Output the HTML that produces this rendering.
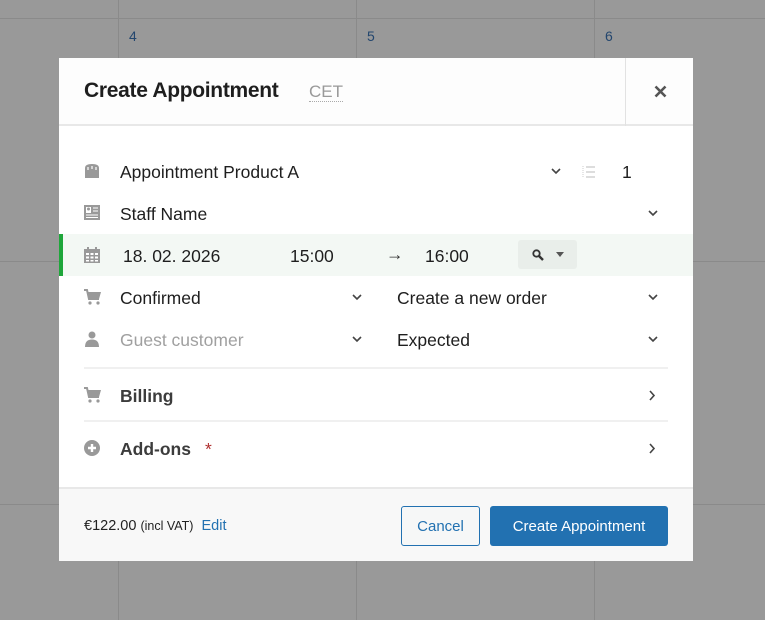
<!DOCTYPE html>
<html><head><meta charset="utf-8"><style>
*{box-sizing:border-box;margin:0;padding:0}
body{width:765px;height:620px;background:#999;position:relative;overflow:hidden;font-family:"Liberation Sans",sans-serif;color:#1e1e1e}
.vl{position:absolute;top:0;height:620px;width:1px;background:#8a8a8a}
.hl{position:absolute;left:0;width:765px;height:1px;background:#8a8a8a}
.num{position:absolute;top:28px;font-size:14px;color:#23466e}
.modal{position:absolute;left:59px;top:58px;width:634px;height:503px;background:#fff}
.hdr{height:68px;border-bottom:2px solid #e8e8e8;position:relative;background:#fdfdfd}
.hdr h1{position:absolute;left:25px;top:21px;font-size:21px;font-weight:bold;letter-spacing:-0.3px;color:#1e1e1e}
.hdr .cet{position:absolute;left:250px;top:25px;font-size:17px;color:#999;border-bottom:1px dotted #aaa;line-height:18px}
.close{position:absolute;left:566px;top:0;width:68px;height:68px;border-left:1px solid #e2e2e2;color:#555}
.row{position:absolute;left:0;width:634px;height:42px;font-size:17.5px}
.row .t{position:absolute;top:12px}
.ic{position:absolute;left:25px;top:13px}
.sep{position:absolute;left:25px;width:584px;height:2px;background:#f0f0f0}
.foot{position:absolute;left:0;top:429px;width:634px;height:74px;background:#f8f8f8;border-top:2px solid #e8e8e8}
.btn{position:absolute;top:17px;height:40px;border-radius:3px;font-size:15px;display:flex;align-items:center;justify-content:center}
</style></head><body>
<div class="hl" style="top:18px"></div>
<div class="hl" style="top:261px"></div>
<div class="hl" style="top:504px"></div>
<div class="vl" style="left:118px"></div>
<div class="vl" style="left:356px"></div>
<div class="vl" style="left:594px"></div>
<div class="num" style="left:129px">4</div>
<div class="num" style="left:367px">5</div>
<div class="num" style="left:605px">6</div>

<div class="modal">
 <div class="hdr"><h1>Create Appointment</h1><span class="cet">CET</span><div class="close"><svg style="position:absolute;left:28px;top:27px" width="13" height="13" viewBox="0 0 13 13"><path d="M1.5 1.5L11.5 11.5M11.5 1.5L1.5 11.5" stroke="#555" stroke-width="2.6"/></svg></div></div>

 <div class="row" style="top:92px">
  <svg class="ic" width="16" height="16" viewBox="0 0 16 16"><path d="M1 15V5Q1 1 8 1Q15 1 15 5V15Z" fill="#999"/><path d="M4 7V4M8 6V3M12 7V4" stroke="#fff" stroke-width="1.2"/></svg>
  <span class="t" style="left:61px">Appointment Product A</span>
  <svg style="position:absolute;left:492px;top:18px" width="10" height="7" viewBox="0 0 10 7"><path d="M1 1L5 5L9 1" stroke="#444" stroke-width="1.6" fill="none"/></svg>
  <svg style="position:absolute;left:523px;top:15px" width="14" height="14" viewBox="0 0 14 14"><path d="M4 2H13M4 7H13M4 12H13" stroke="#bbb" stroke-width="1"/><path d="M1 1V13" stroke="#ccc" stroke-dasharray="1 1"/></svg>
  <span class="t" style="left:563px">1</span>
 </div>
 <div class="row" style="top:134px">
  <svg class="ic" width="16" height="15" viewBox="0 0 16 15"><rect x="0" y="0" width="16" height="15" fill="#999"/><rect x="2" y="2" width="5" height="6" fill="#fff"/><circle cx="4.5" cy="4" r="1.5" fill="#999"/><path d="M9 3H14M9 6H14M2 10H14M2 12.5H14" stroke="#fff" stroke-width="1"/></svg>
  <span class="t" style="left:61px">Staff Name</span>
  <svg style="position:absolute;left:589px;top:18px" width="10" height="7" viewBox="0 0 10 7"><path d="M1 1L5 5L9 1" stroke="#444" stroke-width="1.6" fill="none"/></svg>
 </div>
 <div class="row" style="top:176px;background:#f3f8f4">
  <div style="position:absolute;left:0;top:0;width:4px;height:42px;background:#1ea63a"></div>
  <svg class="ic" width="16" height="16" viewBox="0 0 16 16"><rect x="0" y="2" width="16" height="14" fill="#999"/><rect x="3" y="0" width="2" height="4" fill="#999"/><rect x="11" y="0" width="2" height="4" fill="#999"/><g fill="#fff"><rect x="2" y="6" width="3" height="2"/><rect x="6.5" y="6" width="3" height="2"/><rect x="11" y="6" width="3" height="2"/><rect x="2" y="9.5" width="3" height="2"/><rect x="6.5" y="9.5" width="3" height="2"/><rect x="11" y="9.5" width="3" height="2"/><rect x="2" y="13" width="3" height="1.5"/><rect x="6.5" y="13" width="3" height="1.5"/><rect x="11" y="13" width="3" height="1.5"/></g></svg>
  <span class="t" style="left:64px">18. 02. 2026</span>
  <span class="t" style="left:231px">15:00</span>
  <span class="t" style="left:327px;top:10px;color:#333">→</span>
  <span class="t" style="left:366px">16:00</span>
  <div style="position:absolute;left:459px;top:6px;width:59px;height:29px;background:#e9eeea;border-radius:3px">
   <svg style="position:absolute;left:14px;top:9px" width="12" height="12" viewBox="0 0 12 12"><circle cx="4.5" cy="4.5" r="3.2" stroke="#333" stroke-width="1.8" fill="none"/><path d="M7 7L11 11" stroke="#333" stroke-width="2.4"/></svg>
   <svg style="position:absolute;left:38px;top:12px" width="8" height="5" viewBox="0 0 8 5"><path d="M0 0H8L4 5Z" fill="#555"/></svg>
  </div>
 </div>
 <div class="row" style="top:218px">
  <svg class="ic" width="17" height="16" viewBox="0 0 17 16"><path d="M0 1H3L5 10H15L17 3H4" fill="#999"/><path d="M0 1H3L5 10H15" stroke="#999" stroke-width="2" fill="none"/><circle cx="6" cy="14" r="1.6" fill="#999"/><circle cx="14" cy="14" r="1.6" fill="#999"/></svg>
  <span class="t" style="left:61px">Confirmed</span>
  <svg style="position:absolute;left:293px;top:18px" width="10" height="7" viewBox="0 0 10 7"><path d="M1 1L5 5L9 1" stroke="#444" stroke-width="1.6" fill="none"/></svg>
  <span class="t" style="left:338px">Create a new order</span>
  <svg style="position:absolute;left:589px;top:18px" width="10" height="7" viewBox="0 0 10 7"><path d="M1 1L5 5L9 1" stroke="#444" stroke-width="1.6" fill="none"/></svg>
 </div>
 <div class="row" style="top:260px">
  <svg class="ic" width="16" height="16" viewBox="0 0 16 16"><circle cx="8" cy="4" r="3.5" fill="#999"/><path d="M1 16Q1 8.5 8 8.5Q15 8.5 15 16Z" fill="#999"/></svg>
  <span class="t" style="left:61px;color:#a0a0a0">Guest customer</span>
  <svg style="position:absolute;left:293px;top:18px" width="10" height="7" viewBox="0 0 10 7"><path d="M1 1L5 5L9 1" stroke="#444" stroke-width="1.6" fill="none"/></svg>
  <span class="t" style="left:338px">Expected</span>
  <svg style="position:absolute;left:589px;top:18px" width="10" height="7" viewBox="0 0 10 7"><path d="M1 1L5 5L9 1" stroke="#444" stroke-width="1.6" fill="none"/></svg>
 </div>
 <div class="sep" style="top:309px"></div>
 <div class="row" style="top:316px">
  <svg class="ic" width="17" height="16" viewBox="0 0 17 16"><path d="M0 1H3L5 10H15L17 3H4" fill="#999"/><path d="M0 1H3L5 10H15" stroke="#999" stroke-width="2" fill="none"/><circle cx="6" cy="14" r="1.6" fill="#999"/><circle cx="14" cy="14" r="1.6" fill="#999"/></svg>
  <span class="t" style="left:61px;font-weight:bold;color:#3c3c3c">Billing</span>
  <svg style="position:absolute;left:590px;top:16px" width="7" height="11" viewBox="0 0 7 11"><path d="M1 1L5 5.5L1 10" stroke="#444" stroke-width="1.6" fill="none"/></svg>
 </div>
 <div class="sep" style="top:362px"></div>
 <div class="row" style="top:369px">
  <svg class="ic" width="16" height="16" viewBox="0 0 16 16"><circle cx="8" cy="8" r="8" fill="#999"/><path d="M8 4V12M4 8H12" stroke="#fff" stroke-width="2.4"/></svg>
  <span class="t" style="left:61px;font-weight:bold;color:#3c3c3c">Add-ons</span>
  <span class="t" style="left:146px;color:#b03030">*</span>
  <svg style="position:absolute;left:590px;top:16px" width="7" height="11" viewBox="0 0 7 11"><path d="M1 1L5 5.5L1 10" stroke="#444" stroke-width="1.6" fill="none"/></svg>
 </div>

 <div class="foot">
  <div style="position:absolute;left:25px;top:29px;font-size:14.5px;color:#222">€122.00 <span style="font-size:12.5px">(incl VAT)</span> <span style="color:#2271b1;margin-left:4px">Edit</span></div>
  <div class="btn" style="left:342px;width:79px;border:1px solid #2271b1;color:#2271b1;background:#f6f7f7">Cancel</div>
  <div class="btn" style="left:431px;width:178px;background:#2271b1;color:#fff">Create Appointment</div>
 </div>
</div>
</body></html>
